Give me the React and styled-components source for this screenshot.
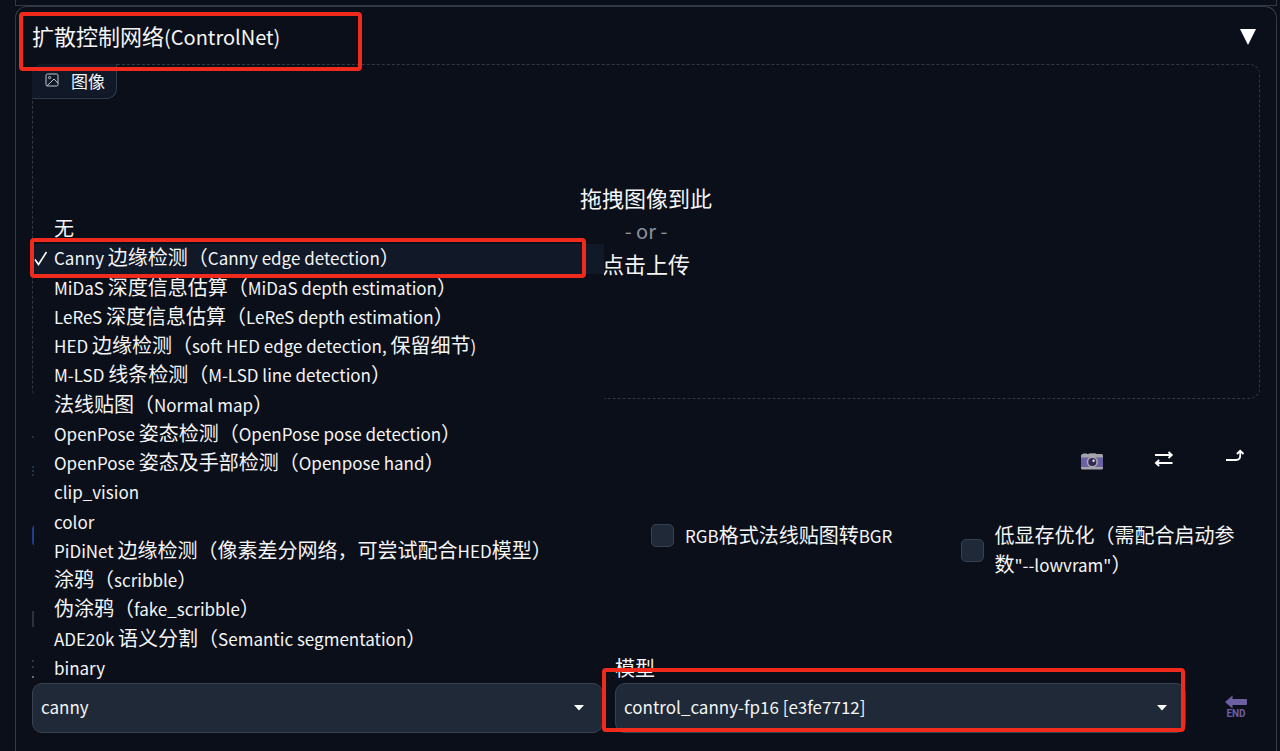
import React from "react";
import styled, { createGlobalStyle } from "styled-components";

const color = {
  page: "#0b0f19",
  line: "#333a47",
  dash: "#323842",
  field: "#1f2937",
  fieldLine: "#374151",
  active: "#111827",
  text: "#f5f5f6",
  muted: "#8b919c",
  mark: "#f02a1c",
  violet: "#6c60a2",
};

const Global = createGlobalStyle`
  *, *::before, *::after { box-sizing: border-box; }
  body {
    margin: 0;
    background: ${color.page};
    color: ${color.text};
    font-family: "Noto Sans CJK SC", sans-serif;
    font-size: 17px;
    line-height: 29px;
  }
  button, select, input { font: inherit; color: inherit; }
`;

const Page = styled.main`
  padding: 0 3px 0 15px;
`;

const PreviousPanel = styled.div`
  height: 6px;
  border: 1px solid ${color.line};
  border-top: 0;
`;

const Panel = styled.section`
  padding: 0 16px 18px;
  border: 1px solid ${color.line};
  border-bottom: 0;
  border-radius: 12px 12px 0 0;
`;

const PanelHeader = styled.header`
  position: relative;
  height: 57px;
  padding-top: 2px;
  display: flex;
  align-items: center;
  justify-content: space-between;
`;

const Title = styled.h2`
  margin: 0;
  font-size: 20px;
  font-weight: 400;
  white-space: nowrap;
`;

const Han = styled.span`
  font-size: ${(p) => (p.$large ? 22 : 20)}px;
  line-height: 20px;
`;

const CollapseButton = styled.button`
  padding: 4px;
  border: 0;
  background: none;
  display: flex;
`;

const Highlight = styled.span`
  position: absolute;
  z-index: 3;
  top: ${(p) => p.$top}px;
  bottom: ${(p) => p.$bottom}px;
  left: ${(p) => p.$left}px;
  right: ${(p) => p.$right};
  width: ${(p) => p.$width};
  border: 4px solid ${color.mark};
  border-radius: 4px;
  pointer-events: none;
`;

const DropZone = styled.div`
  position: relative;
  height: 335px;
  padding-bottom: 2px;
  display: flex;
  flex-direction: column;
  align-items: center;
  justify-content: center;
  border: 1px dashed ${color.dash};
  border-radius: 10px;
  font-size: 20px;
  line-height: 33px;
`;

const ZoneText = styled.span`
  font-size: 22px;
`;

const ZoneTag = styled.div`
  position: absolute;
  top: -1px;
  left: -1px;
  height: 35px;
  padding: 0 11px 2px 13px;
  display: flex;
  align-items: center;
  gap: 12px;
  font-size: 17px;
  background: ${color.active};
  border: 1px solid ${color.line};
  border-top: 0;
  border-left: 0;
  border-radius: 10px 0 10px 0;
`;

const Muted = styled.span`
  color: ${color.muted};
`;

const Controls = styled.div`
  position: relative;
`;

const ClippedEdge = styled.svg`
  position: absolute;
  top: 0;
  left: 0;
`;

const Tools = styled.div`
  padding-top: 38px;
  display: flex;
  justify-content: flex-end;
  gap: 24px;
`;

const IconButton = styled.button`
  width: 48px;
  height: ${(p) => (p.$tall ? 52 : 44)}px;
  padding: 0;
  border: 0;
  background: none;
  display: flex;
  flex-direction: column;
  align-items: center;
  justify-content: center;
  flex: none;
`;

const Options = styled.div`
  margin-top: 40px;
  display: grid;
  grid-template-columns: repeat(4, 1fr);
  gap: 10px;
  align-items: start;
`;

const Option = styled.label`
  grid-column: ${(p) => p.$column};
  min-height: 29px;
  display: flex;
  align-items: center;
  gap: 11px;
  padding-right: 18px;
`;

const Checkbox = styled.input`
  appearance: none;
  flex: none;
  width: 23px;
  height: 23px;
  margin: 0;
  border: 1px solid ${(p) => (p.defaultChecked ? "#1d3f8f" : color.fieldLine)};
  border-radius: 5px;
  background: ${(p) => (p.defaultChecked ? "#1d3f8f" : color.field)};
`;

const Fields = styled.div`
  margin-top: 75px;
  display: flex;
  align-items: flex-end;
`;

const Field = styled.div`
  position: relative;
  flex: 1;
  margin-right: ${(p) => p.$gap}px;
`;

const FieldLabel = styled.label`
  display: block;
  height: 29px;
`;

const SelectBox = styled.div`
  position: relative;
  display: flex;
  align-items: center;
`;

const Select = styled.select`
  appearance: none;
  width: 100%;
  height: 50px;
  padding: 0 40px 3px 8px;
  background: ${color.field};
  border: 1px solid ${color.fieldLine};
  border-radius: 10px;
`;

const Caret = styled.svg`
  position: absolute;
  right: 18px;
  pointer-events: none;
`;

const Menu = styled.ul`
  position: absolute;
  z-index: 2;
  bottom: 50px;
  left: 2px;
  right: -1px;
  height: 468px;
  margin: 0;
  padding: 0;
  list-style: none;
  display: grid;
  grid-auto-rows: 1fr;
  background: ${color.page};
`;

const MenuItem = styled.li`
  position: relative;
  padding-left: 20px;
  line-height: 28px;
  white-space: nowrap;
  background: ${(p) => (p.$selected ? color.active : "transparent")};
`;

const Check = styled.svg`
  position: absolute;
  top: 7px;
  left: 0;
`;

const EndText = styled.span`
  color: ${color.violet};
  font: bold 10px/10px Roboto, sans-serif;
`;

const HAN = /([\u3000-\u9fff\uff00-\uffef]+)/;

function Mixed({ children, large }) {
  return children
    .split(HAN)
    .filter(Boolean)
    .map((part, i) =>
      HAN.test(part) ? (
        <Han key={i} $large={large}>
          {part}
        </Han>
      ) : (
        <React.Fragment key={i}>{part}</React.Fragment>
      )
    );
}

const preprocessors = [
  "无",
  "Canny 边缘检测（Canny edge detection）",
  "MiDaS 深度信息估算（MiDaS depth estimation）",
  "LeReS 深度信息估算（LeReS depth estimation）",
  "HED 边缘检测（soft HED edge detection, 保留细节)",
  "M-LSD 线条检测（M-LSD line detection）",
  "法线贴图（Normal map）",
  "OpenPose 姿态检测（OpenPose pose detection）",
  "OpenPose 姿态及手部检测（Openpose hand）",
  "clip_vision",
  "color",
  "PiDiNet 边缘检测（像素差分网络，可尝试配合HED模型）",
  "涂鸦（scribble）",
  "伪涂鸦（fake_scribble）",
  "ADE20k 语义分割（Semantic segmentation）",
  "binary",
];

function Arrow() {
  return (
    <Caret width="12" height="6" viewBox="0 0 12 6" aria-hidden="true">
      <path d="M1 0h10L6 5.5z" fill="#fff" />
    </Caret>
  );
}

export default function App() {
  return (
    <>
      <Global />
      <Page>
        <PreviousPanel />
        <Panel>
          <PanelHeader>
            <Title>
              <Mixed large>扩散控制网络(ControlNet)</Mixed>
            </Title>
            <CollapseButton aria-label="收起">
              <svg width="16" height="16" viewBox="0 0 16 16">
                <path d="M0 0h16L8 16z" fill="#fff" />
              </svg>
            </CollapseButton>
            <Highlight $top={5} $bottom={-7} $left={-13} $width="343px" $right="auto" />
          </PanelHeader>

          <DropZone>
            <ZoneTag>
              <svg width="14" height="14" viewBox="0 0 14 14" fill="none" stroke="#c3c7ce">
                <rect x="1" y="1" width="12" height="12" rx="1.5" />
                <circle cx="4.6" cy="4.6" r="1.1" />
                <path d="M2 12.800 9 6 13 10.200" />
              </svg>
              <span>图像</span>
            </ZoneTag>
            <ZoneText>拖拽图像到此</ZoneText>
            <Muted>- or -</Muted>
            <ZoneText>点击上传</ZoneText>
          </DropZone>

          <Controls>
            <ClippedEdge width="2" height="284" aria-hidden="true">
              <path d="M1 37v2M1 67v2M1 71v2M1 75v2" stroke="#31587d" />
              <path d="M1 212v16" stroke="#2b323e" strokeWidth="2" />
              <path d="M1 261v2M1 267v2" stroke="#39706f" />
              <path d="M0 278h2" stroke="#c9cbce" />
            </ClippedEdge>

            <Tools>
              <IconButton aria-label="启用摄像头">
                <svg width="24" height="24" viewBox="0 0 24 24">
                  <path d="M3 7.500V6.200h4v1.300M8.500 7l1-1h6l1 1z" fill="#77737e" />
                  <rect x="1" y="7" width="22" height="15.500" rx="1.500" fill="#a5a3ab" />
                  <rect x="1" y="10.500" width="22" height="9.500" fill="#6a60a4" />
                  <circle cx="12.300" cy="15" r="5.600" fill="#aaa8b0" />
                  <circle cx="12.300" cy="15" r="4" fill="#33284f" />
                  <circle cx="13.600" cy="13.800" r="1.200" fill="#e8e6ef" />
                </svg>
              </IconButton>
              <IconButton aria-label="镜像摄像头">
                <svg width="20" height="18" viewBox="0 0 20 18" fill="none" stroke="#fff" strokeWidth="1.8">
                  <path d="M1 5h16.500M14.500 2 17.800 5l-3.300 3M18.500 13H2M5.200 10 1.900 13l3.300 3" />
                </svg>
              </IconButton>
              <IconButton aria-label="发送尺寸">
                <svg width="20" height="20" viewBox="0 0 20 20" fill="none" stroke="#fff" strokeWidth="1.800">
                  <path d="M0 11h10q4.200 0 4.200-4.200V2M10.900 5 14.200 1.800 17.500 5" />
                </svg>
              </IconButton>
            </Tools>

            <Options>
              <Option $column={1}>
                <Checkbox type="checkbox" defaultChecked aria-label="启用" />
              </Option>
              <Option $column={3}>
                <Checkbox type="checkbox" />
                <span>
                  <Mixed>RGB格式法线贴图转BGR</Mixed>
                </span>
              </Option>
              <Option $column={4}>
                <Checkbox type="checkbox" />
                <span>
                  <Mixed>低显存优化（需配合启动参数"--lowvram"）</Mixed>
                </span>
              </Option>
            </Options>

            <Fields>
              <Field $gap={12}>
                <SelectBox>
                  <Select aria-label="预处理器" defaultValue="canny">
                    <option>canny</option>
                  </Select>
                  <Arrow />
                </SelectBox>
                <Menu role="listbox">
                  {preprocessors.map((name, i) => (
                    <MenuItem key={name} role="option" aria-selected={i === 1} $selected={i === 1}>
                      {i === 1 && (
                        <Check width="14" height="16" viewBox="0 0 14 16" fill="none" stroke="#fff" strokeWidth="1.600">
                          <path d="M1 8.500 4.500 13.500 12.500 1" />
                        </Check>
                      )}
                      <Mixed>{name}</Mixed>
                      {i === 1 && <Highlight $top={-6} $bottom={-4} $left={-4} $right="18px" $width="auto" />}
                    </MenuItem>
                  ))}
                </Menu>
              </Field>
              <Field $gap={26}>
                <FieldLabel htmlFor="model">
                  <Mixed>模型</Mixed>
                </FieldLabel>
                <SelectBox>
                  <Select id="model" defaultValue="control_canny-fp16 [e3fe7712]">
                    <option>control_canny-fp16 [e3fe7712]</option>
                  </Select>
                  <Arrow />
                </SelectBox>
                <Highlight $top={14} $bottom={1} $left={-13} $right="1px" $width="auto" />
              </Field>
              <IconButton $tall aria-label="END">
                <svg width="24" height="14" viewBox="0 0 24 14">
                  <path d="M1 7 8.500.5V4H22q1 0 1 1v4q0 1-1 1H8.500v3.500z" fill={color.violet} />
                </svg>
                <EndText>END</EndText>
              </IconButton>
            </Fields>
          </Controls>
        </Panel>
      </Page>
    </>
  );
}
